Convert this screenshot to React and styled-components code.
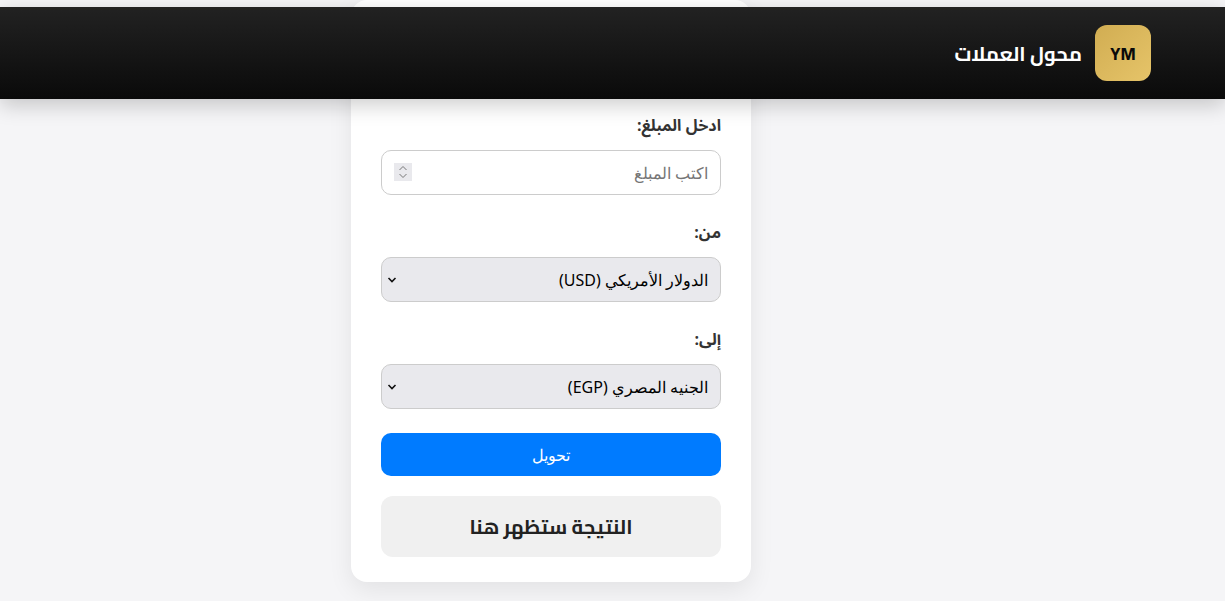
import React from 'react'
import styled, { createGlobalStyle } from 'styled-components'

const GlobalStyle = createGlobalStyle`
  * { box-sizing: border-box; }
  html, body { margin: 0; padding: 0; }
  body {
    background: #f5f5f7;
    font-family: "Noto Sans", sans-serif;
    overflow: hidden;
  }
`

const arrow = `url("data:image/svg+xml,%3Csvg xmlns='http://www.w3.org/2000/svg' width='10' height='8' viewBox='0 0 10 8'%3E%3Cpath d='M1.5 2 L5 5.5 L8.5 2' fill='none' stroke='%23111' stroke-width='1.6'/%3E%3C/svg%3E")`

const Page = styled.div`
  position: relative;
  height: 601px;
  overflow: hidden;
  padding-left: 351px;
`

const Header = styled.header`
  position: absolute;
  top: 7px;
  left: 0;
  right: 0;
  height: 92px;
  display: flex;
  direction: rtl;
  align-items: center;
  gap: 13px;
  padding: 0 74px;
  background: linear-gradient(180deg, #222222, #0a0a0a);
  box-shadow: 0 6px 20px rgba(0, 0, 0, 0.2);
`

const Logo = styled.div`
  width: 56px;
  height: 56px;
  display: flex;
  align-items: center;
  justify-content: center;
  border-radius: 12px;
  background: linear-gradient(135deg, #d1ad52, #e6c469);
  color: #0a0a0a;
  font-family: "Cairo", sans-serif;
  font-size: 18px;
  font-weight: 700;
  direction: ltr;
`

const Title = styled.h1`
  margin: 0;
  color: #fff;
  font-family: "Cairo", sans-serif;
  font-size: 20px;
  font-weight: 700;
`

const Card = styled.main`
  width: 400px;
  height: 582px;
  padding: 112px 30px 25px;
  direction: rtl;
  background: #fff;
  border-radius: 16px;
  box-shadow: 0 8px 24px rgba(0, 0, 0, 0.08);
  display: flex;
  flex-direction: column;
`

const Label = styled.label`
  display: block;
  height: 26px;
  margin-bottom: 12px;
  color: #333;
  font-family: "Noto Sans Arabic", "Noto Sans", sans-serif;
  font-size: 16px;
  font-weight: 700;
  line-height: 28px;
`

const Field = styled.div`
  margin-bottom: 24px;
`

const AmountBox = styled.div`
  position: relative;
`

const AmountInput = styled.input`
  display: block;
  width: 100%;
  height: 45px;
  padding: 0 12px;
  border: 1px solid #ccc;
  border-radius: 10px;
  background: #fff;
  font-family: inherit;
  font-size: 16px;
  appearance: textfield;

  &::placeholder { color: #757575; }
  &::-webkit-inner-spin-button { appearance: none; }
`

const Spinner = styled.svg`
  position: absolute;
  left: 13px;
  top: 13px;
  width: 18px;
  height: 18px;
  background: #e9e9ed;
  pointer-events: none;
`

const Select = styled.select`
  display: block;
  width: 100%;
  height: 45px;
  padding: 0 12px;
  border: 1px solid #ccc;
  border-radius: 10px;
  background: #e9e9ed ${arrow} no-repeat 5px 18px;
  color: #000;
  font-family: inherit;
  font-size: 16px;
  appearance: none;
`

const ConvertButton = styled.button`
  width: 100%;
  height: 43px;
  border: 0;
  border-radius: 10px;
  background: #007bff;
  color: #fff;
  font-family: inherit;
  font-size: 16px;
`

const Result = styled.div`
  height: 61px;
  margin-top: 20px;
  display: flex;
  align-items: center;
  justify-content: center;
  border-radius: 12px;
  background: #f0f0f0;
  color: #222;
  font-family: "Cairo", sans-serif;
  font-size: 20px;
  font-weight: 700;
`

export default function App() {
  return (
    <>
      <GlobalStyle />
      <Page>
        <Card>
          <Field>
            <Label htmlFor="amount">ادخل المبلغ:</Label>
            <AmountBox>
              <AmountInput id="amount" type="number" placeholder="اكتب المبلغ" />
              <Spinner viewBox="0 0 18 18">
                <path d="M5.5 7 L9 3.5 L12.5 7 M5.5 11 L9 14.5 L12.5 11" fill="none" stroke="#777" strokeWidth="1" />
              </Spinner>
            </AmountBox>
          </Field>
          <Field>
            <Label htmlFor="from">من:</Label>
            <Select id="from" defaultValue="USD">
              <option value="USD">الدولار الأمريكي (USD)</option>
              <option value="EGP">الجنيه المصري (EGP)</option>
            </Select>
          </Field>
          <Field>
            <Label htmlFor="to">إلى:</Label>
            <Select id="to" defaultValue="EGP">
              <option value="USD">الدولار الأمريكي (USD)</option>
              <option value="EGP">الجنيه المصري (EGP)</option>
            </Select>
          </Field>
          <ConvertButton type="button">تحويل</ConvertButton>
          <Result>النتيجة ستظهر هنا</Result>
        </Card>
        <Header>
          <Logo>YM</Logo>
          <Title>محول العملات</Title>
        </Header>
      </Page>
    </>
  )
}
